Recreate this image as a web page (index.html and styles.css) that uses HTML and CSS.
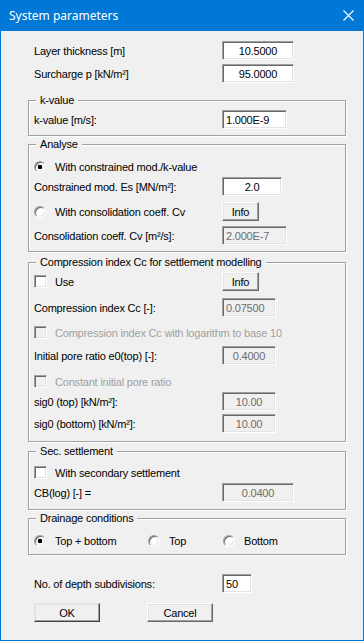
FILE: index.html
```html
<!DOCTYPE html>
<html lang="en">
<head>
  <meta charset="UTF-8">
  <title>System parameters</title>
  <link rel="stylesheet" href="styles.css">
</head>
<body>
  <div class="dialog">
    <div class="titlebar">
      <span class="title">System parameters</span>
      <svg class="close" width="11" height="11" viewBox="0 0 11 11">
        <path d="M0.5 0.5L10.5 10.5M10.5 0.5L0.5 10.5" stroke="#fff" stroke-width="1.1" fill="none"/>
      </svg>
    </div>

    <div class="content">
      <div class="row plain"><span class="lbl">Layer thickness [m]</span><input class="edit w72 mid" value="10.5000"></div>
      <div class="row plain mt4"><span class="lbl">Surcharge p [kN/m²]</span><input class="edit w72 mid" value="95.0000"></div>

      <fieldset class="group mt11 pb6">
        <legend>k-value</legend>
        <div class="row mt3"><span class="lbl">k-value [m/s]:</span><input class="edit w65" value="1.000E-9"></div>
      </fieldset>

      <fieldset class="group mt2 pb6">
        <legend>Analyse</legend>
        <div class="row mt6"><span class="radio on"></span><span>With constrained mod./k-value</span></div>
        <div class="row mt1"><span class="lbl">Constrained mod. Es [MN/m²]:</span><input class="edit w60 mid" value="2.0"></div>
        <div class="row mt6">
          <span class="opt"><span class="radio"></span><span>With consolidation coeff. Cv</span></span>
          <button class="btn w37">Info</button>
        </div>
        <div class="row mt5"><span class="lbl">Consolidation coeff. Cv [m²/s]:</span><input class="edit w65 off" value="2.000E-7" disabled></div>
      </fieldset>

      <fieldset class="group mt4 pb8">
        <legend>Compression index Cc for settlement modelling</legend>
        <div class="row mt3">
          <span class="opt"><span class="check"></span><span>Use</span></span>
          <button class="btn w37">Info</button>
        </div>
        <div class="row mt7"><span class="lbl">Compression index Cc [-]:</span><input class="edit w54 off" value="0.07500" disabled></div>
        <div class="row mt6 dim"><span class="check off"></span><span>Compression index Cc with logarithm to base 10</span></div>
        <div class="row mt4"><span class="lbl">Initial pore ratio e0(top) [-]:</span><input class="edit w54 off mid" value="0.4000" disabled></div>
        <div class="row mt7 dim"><span class="check off"></span><span>Constant initial pore ratio</span></div>
        <div class="row mt1"><span class="lbl">sig0 (top) [kN/m²]:</span><input class="edit w54 off mid" value="10.00" disabled></div>
        <div class="row mt3"><span class="lbl">sig0 (bottom) [kN/m²]:</span><input class="edit w54 off mid" value="10.00" disabled></div>
      </fieldset>

      <fieldset class="group mt3 pb7">
        <legend>Sec. settlement</legend>
        <div class="row mt5"><span class="check"></span><span>With secondary settlement</span></div>
        <div class="row mt1"><span class="lbl">CB(log) [-] =</span><input class="edit w72 off mid" value="0.0400" disabled></div>
      </fieldset>

      <fieldset class="group mt2 pb4">
        <legend>Drainage conditions</legend>
        <div class="row mt6">
          <span class="opt w114"><span class="radio on"></span><span>Top + bottom</span></span>
          <span class="opt w75"><span class="radio"></span><span>Top</span></span>
          <span class="opt auto"><span class="radio"></span><span>Bottom</span></span>
        </div>
      </fieldset>

      <div class="row plain mt19"><span class="lbl">No. of depth subdivisions:</span><input class="edit w30" value="50"></div>

      <div class="row plain mt10 buttons">
        <button class="btn w66 default">OK</button>
        <button class="btn w66">Cancel</button>
      </div>
    </div>
  </div>
</body>
</html>
```

FILE: styles.css
```css
* {
  box-sizing: border-box;
}
body {
  margin: 0;
  font-family: "Liberation Sans", Arial, sans-serif;
  font-size: 11px;
  letter-spacing: -0.2px;
  color: #000000;
  background: #ffffff;
}
.dialog {
  width: 364px;
  height: 641px;
  background: #f0f0f0;
  border: 1px solid #0078d7;
  border-top: 0;
}

/* title bar */
.titlebar {
  height: 31px;
  background: #0078d7;
  display: flex;
  align-items: center;
  padding: 0 9px 0 8px;
  color: #ffffff;
}
.title {
  flex: 1;
  font-family: "Noto Sans", "Open Sans", sans-serif;
  font-size: 12px;
  letter-spacing: 0;
}
.close {
  display: block;
}

/* dialog body */
.content {
  padding: 10px 0 0 27px;
}
.row {
  display: flex;
  align-items: center;
  height: 19px;
  white-space: nowrap;
}
.row.plain {
  padding-left: 6px;
}
.lbl {
  width: 188px;
}
.opt {
  display: flex;
  flex: none;
  align-items: center;
  width: 188px;
}
.opt.auto {
  width: auto;
}
.dim {
  color: #a0a0a0;
}

/* group boxes */
.group {
  width: 318px;
  margin: 0;
  padding: 0 5px;
  border: 1px solid #a0a0a0;
  box-shadow: inset 1px 1px 0 #ffffff, 1px 1px 0 #ffffff;
  min-inline-size: 0;
}
.group legend {
  margin-left: 2px;
  padding: 0 4px;
  line-height: 13px;
  background: #f0f0f0;
}

/* edit boxes */
.edit {
  height: 19px;
  margin: 0;
  padding: 0 3px;
  font: inherit;
  letter-spacing: inherit;
  color: #000000;
  background: #ffffff;
  border: 1px solid;
  border-color: #a0a0a0 #ffffff #ffffff #a0a0a0;
  box-shadow: inset 1px 1px 0 #696969, inset -1px -1px 0 #e3e3e3;
  outline: none;
}
.edit.mid {
  text-align: center;
}
.edit.off {
  background: #f0f0f0;
  color: #6d6d6d;
  -webkit-text-fill-color: #6d6d6d;
  opacity: 1;
}

/* buttons */
.btn {
  height: 19px;
  margin: 0;
  padding: 0;
  font: inherit;
  letter-spacing: inherit;
  color: #000000;
  background: #f0f0f0;
  border: 1px solid;
  border-color: #ffffff #696969 #696969 #ffffff;
  box-shadow: inset -1px -1px 0 #a0a0a0, inset 1px 1px 0 #e3e3e3;
}
.btn.default {
  border-color: #e3e3e3 #404040 #404040 #e3e3e3;
}
.buttons {
  gap: 47px;
}

/* radio buttons and check boxes */
.radio,
.check {
  flex: none;
  background: #ffffff;
  border: 1px solid;
  border-color: #a0a0a0 #ffffff #ffffff #a0a0a0;
  box-shadow: inset 1px 1px 0 #696969, inset -1px -1px 0 #e3e3e3;
}
.radio {
  width: 12px;
  height: 12px;
  margin-right: 9px;
  border-radius: 50%;
}
.radio.on {
  background: radial-gradient(circle, #000000 0 2px, #ffffff 2.6px);
}
.check {
  width: 13px;
  height: 13px;
  margin-right: 8px;
}
.check.off {
  background: #f0f0f0;
}

/* widths */
.w30 { width: 30px; }
.w37 { width: 37px; }
.w54 { width: 54px; }
.w60 { width: 60px; }
.w65 { width: 65px; }
.w66 { width: 66px; }
.w72 { width: 72px; }
.w75 { width: 75px; }
.w114 { width: 114px; }

/* vertical spacing */
.mt1 { margin-top: 1px; }
.mt2 { margin-top: 2px; }
.mt3 { margin-top: 3px; }
.mt4 { margin-top: 4px; }
.mt5 { margin-top: 5px; }
.mt6 { margin-top: 6px; }
.mt7 { margin-top: 7px; }
.mt10 { margin-top: 10px; }
.mt11 { margin-top: 11px; }
.mt19 { margin-top: 19px; }
.pb4 { padding-bottom: 4px; }
.pb6 { padding-bottom: 6px; }
.pb7 { padding-bottom: 7px; }
.pb8 { padding-bottom: 8px; }
```
